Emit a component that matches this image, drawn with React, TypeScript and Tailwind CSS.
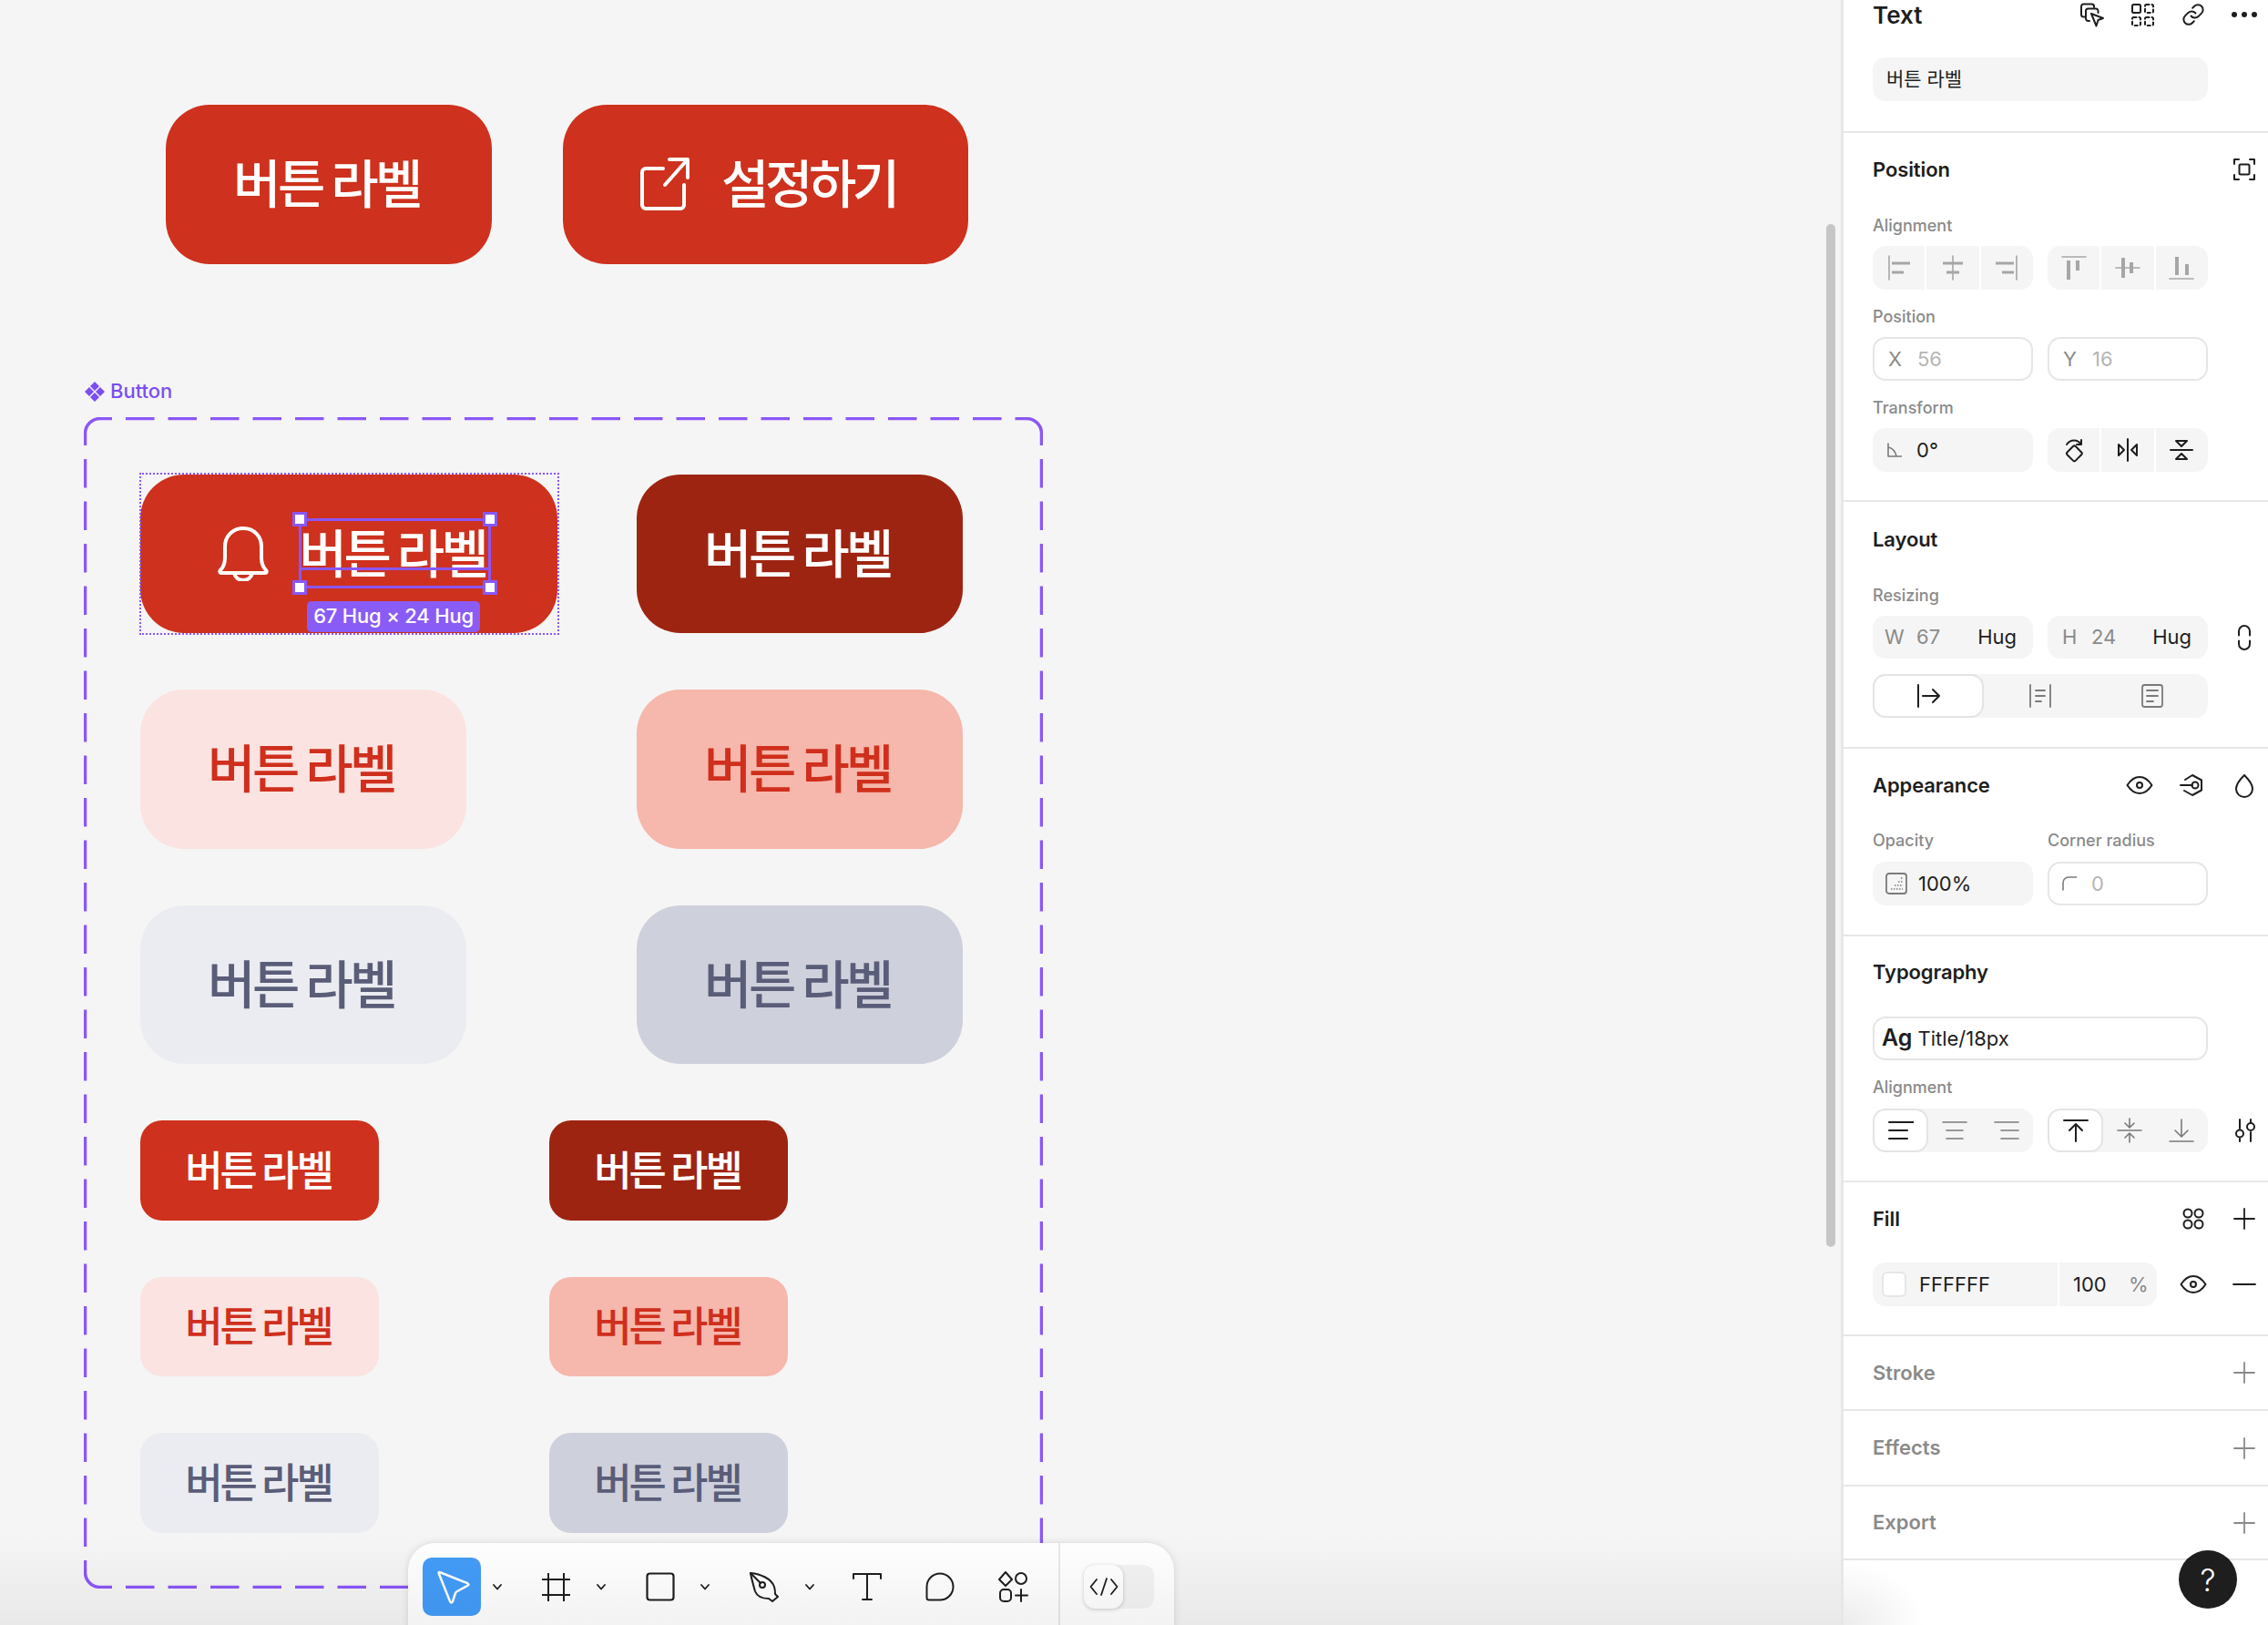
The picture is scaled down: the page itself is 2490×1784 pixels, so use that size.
import React from "react";

const INK = "#1e1e1e";
const GRAY = "#a6a6a6";
const MID = "#7a7a7a";

function S({ w = 28, h = 28, c = INK, sw = 2, vb, children }: { w?: number; h?: number; c?: string; sw?: number; vb?: string; children: React.ReactNode }) {
  return (
    <svg width={w} height={h} viewBox={vb ?? `0 0 ${w} ${h}`} fill="none" stroke={c} strokeWidth={sw} strokeLinecap="round" strokeLinejoin="round" className="shrink-0 block">
      {children}
    </svg>
  );
}

const Bars = ({ kind }: { kind: string }) => {
  const thin = 1.6;
  const thick = 3.2;
  const m: Record<string, React.ReactNode> = {
    l: (<><path d="M3 1v26" strokeWidth={thin} /><path d="M6 9h20M6 19h13" strokeWidth={thick} strokeLinecap="butt" /></>),
    c: (<><path d="M14 1v26" strokeWidth={thin} /><path d="M3 9h22M7 19h14" strokeWidth={thick} strokeLinecap="butt" /></>),
    r: (<><path d="M25 1v26" strokeWidth={thin} /><path d="M2 9h20M9 19h13" strokeWidth={thick} strokeLinecap="butt" /></>),
    t: (<><path d="M1 2h26" strokeWidth={thin} /><path d="M8 6v21M18 6v11" strokeWidth={4} strokeLinecap="butt" /></>),
    m: (<><path d="M1 14h26" strokeWidth={thin} /><path d="M9 3v22M18 8v12" strokeWidth={4} strokeLinecap="butt" /></>),
    b: (<><path d="M1 26h26" strokeWidth={thin} /><path d="M9 2v20M20 10v12" strokeWidth={4} strokeLinecap="butt" /></>),
  };
  return <S c={GRAY}>{m[kind]}</S>;
};

const Eye = () => (
  <S w={30} h={22}>
    <path d="M1.5 11C6 4 10 2 15 2s9 2 13.5 9C24 18 20 20 15 20S6 18 1.5 11Z" />
    <circle cx="15" cy="11" r="3" />
  </S>
);

const Plus = ({ c = INK }: { c?: string }) => (
  <S c={c} sw={1.8}>
    <path d="M14 3v22M3 14h22" />
  </S>
);

function Section({ h, children, className = "" }: { h: string; children: React.ReactNode; className?: string }) {
  return <div className={`${h} box-border border-b-2 border-[#e7e7e7] pl-[32px] pr-[12px] ${className}`}>{children}</div>;
}

const Head = ({ children, right, className = "" }: { children: React.ReactNode; right?: React.ReactNode; className?: string }) => (
  <div className={`flex h-[28px] items-center justify-between ${className}`}>
    <span className="text-[22px] font-semibold tracking-[-0.1px] text-[#1e1e1e]">{children}</span>
    {right}
  </div>
);

const Lab = ({ children, className = "" }: { children: React.ReactNode; className?: string }) => (
  <div className={`flex h-[24px] items-center pb-[2px] text-[18px] font-medium text-[#8a8a8a] ${className}`}>{children}</div>
);

const Group = ({ children, className = "" }: { children: React.ReactNode; className?: string }) => (
  <div className={`flex h-[48px] w-[176px] overflow-hidden rounded-[14px] bg-[#f5f5f5] ${className}`}>{children}</div>
);

const Cell = ({ children, divider, on }: { children: React.ReactNode; divider?: boolean; on?: boolean }) => (
  <div className={`flex flex-1 items-center justify-center ${divider ? "border-r-2 border-white" : ""} ${on ? "rounded-[14px] border-2 border-[#e4e4e4] bg-white" : ""}`}>{children}</div>
);

function Panel() {
  return (
    <aside className="relative box-border h-full w-[469px] shrink-0 border-l-[3px] border-[#e7e7e7] bg-white [font-family:Inter,'Noto_Sans_CJK_KR',sans-serif]">
      <Section h="h-[146px]">
        <div className="flex h-[32px] items-center justify-between">
          <span className="text-[26px] font-semibold text-[#1e1e1e]">Text</span>
          <div className="flex items-center gap-[28px]">
            <S>
              <path d="M17 6V5a2.5 2.5 0 0 0-2.5-2.5h-9A2.5 2.5 0 0 0 3 5v9a2.5 2.5 0 0 0 2.5 2.5H7" />
              <path d="M12 21h-1.5A2.5 2.5 0 0 1 8 18.500V10a2.500 2.500 0 0 1 2.500-2.500H19a2.500 2.500 0 0 1 2.500 2.500v2" />
              <path d="M14 13l13 5-5.500 2-2 6.500Z" />
            </S>
            <S sw={2}>
              <rect x="3" y="3" width="9" height="9" rx="1.500" />
              <rect x="17" y="3" width="9" height="9" rx="1.500" strokeDasharray="3 3" />
              <rect x="3" y="17" width="9" height="9" rx="1.500" strokeDasharray="3 3" />
              <rect x="17" y="17" width="9" height="9" rx="1.500" strokeDasharray="3 3" />
            </S>
            <S>
              <path d="M11.500 15.500a5.500 5.500 0 0 0 8 .6l3.500-3.500a5.500 5.500 0 0 0-7.800-7.800l-2 2" />
              <path d="M16.500 12.500a5.500 5.500 0 0 0-8-.6l-3.500 3.500a5.500 5.500 0 0 0 7.800 7.800l2-2" />
            </S>
            <svg width="28" height="28" viewBox="0 0 28 28" fill={INK} className="block shrink-0">
              <circle cx="3" cy="14" r="3" />
              <circle cx="14" cy="14" r="3" />
              <circle cx="25" cy="14" r="3" />
            </svg>
          </div>
        </div>
        <div className="mt-[31px] flex h-[48px] w-[368px] items-center rounded-[14px] bg-[#f5f5f5] pl-[15px] text-[21px] text-[#1e1e1e]">버튼 라벨</div>
      </Section>

      <Section h="h-[405px]" className="pt-[26px]">
        <Head
          right={
            <S>
              <path d="M8 3H3v5M20 3h5v5M8 25H3v-5M20 25h5v-5" />
              <rect x="8.500" y="8.500" width="11" height="11" rx="1.500" />
            </S>
          }
        >
          Position
        </Head>
        <Lab className="mt-[36px]">Alignment</Lab>
        <div className="mt-[10px] flex w-[368px] justify-between">
          <Group>
            <Cell divider><Bars kind="l" /></Cell>
            <Cell divider><Bars kind="c" /></Cell>
            <Cell><Bars kind="r" /></Cell>
          </Group>
          <Group>
            <Cell divider><Bars kind="t" /></Cell>
            <Cell divider><Bars kind="m" /></Cell>
            <Cell><Bars kind="b" /></Cell>
          </Group>
        </div>
        <Lab className="mt-[18px]">Position</Lab>
        <div className="mt-[10px] flex w-[368px] justify-between text-[22px]">
          <div className="box-border flex h-[48px] w-[176px] items-center rounded-[14px] border-2 border-[#e6e6e6] pl-[15px]">
            <span className="w-[32px] text-[#8a8a8a]">X</span>
            <span className="text-[#b5b5b5]">56</span>
          </div>
          <div className="box-border flex h-[48px] w-[176px] items-center rounded-[14px] border-2 border-[#e6e6e6] pl-[15px]">
            <span className="w-[32px] text-[#8a8a8a]">Y</span>
            <span className="text-[#b5b5b5]">16</span>
          </div>
        </div>
        <Lab className="mt-[18px]">Transform</Lab>
        <div className="mt-[10px] flex w-[368px] justify-between">
          <div className="flex h-[48px] w-[176px] items-center rounded-[14px] bg-[#f5f5f5] pl-[16px] text-[22px] text-[#1e1e1e]">
            <span className="mr-[16px]">
              <S w={16} h={16} c={MID} sw={1.6}>
                <path d="M1 1v14h15M1 5c5 1 8 5 9 10" />
              </S>
            </span>
            0°
          </div>
          <Group>
            <Cell divider>
              <S>
                <rect x="8" y="11" width="13" height="13" rx="2" transform="rotate(45 14 17.500)" />
                <path d="M6 8c4-6 12-6 16 0M22 3v5h-5" />
              </S>
            </Cell>
            <Cell divider>
              <S>
                <path d="M14 2v24M4 8l6 6-6 6ZM24 8l-6 6 6 6Z" />
              </S>
            </Cell>
            <Cell>
              <S>
                <path d="M2 14h24M8 4l6 6 6-6ZM8 24l6-6 6 6Z" />
              </S>
            </Cell>
          </Group>
        </div>
      </Section>

      <Section h="h-[271px]" className="pt-[27px]">
        <Head>Layout</Head>
        <Lab className="mt-[36px]">Resizing</Lab>
        <div className="mt-[10px] flex items-center justify-between">
          <div className="flex w-[368px] justify-between text-[22px]">
            <div className="flex h-[47px] w-[176px] items-center rounded-[14px] bg-[#f5f5f5] pl-[13px] pr-[18px]">
              <span className="w-[35px] text-[#8a8a8a]">W</span>
              <span className="flex-1 text-[#8a8a8a]">67</span>
              <span className="text-[#1e1e1e]">Hug</span>
            </div>
            <div className="flex h-[47px] w-[176px] items-center rounded-[14px] bg-[#f5f5f5] pl-[16px] pr-[18px]">
              <span className="w-[32px] text-[#8a8a8a]">H</span>
              <span className="flex-1 text-[#8a8a8a]">24</span>
              <span className="text-[#1e1e1e]">Hug</span>
            </div>
          </div>
          <S>
            <path d="M8 11.500V7a6 6 0 0 1 12 0v4.500M8 17.500V21a6 6 0 0 0 12 0v-3.500" />
          </S>
        </div>
        <div className="mt-[17px] flex h-[48px] w-[368px] rounded-[14px] bg-[#f5f5f5]">
          <div className="box-border flex w-[122px] items-center justify-center rounded-[14px] border-2 border-[#e4e4e4] bg-white">
            <S>
              <path d="M3 2v24M8 14h18M19 7l7 7-7 7" />
            </S>
          </div>
          <div className="flex w-[123px] items-center justify-center">
            <S c={MID} sw={1.8}>
              <path d="M3 2v24M25 2v24M9 8h10M9 14h10M9 20h6" />
            </S>
          </div>
          <div className="flex w-[123px] items-center justify-center">
            <S c={MID} sw={1.8}>
              <rect x="3" y="2" width="22" height="24" rx="2.500" />
              <path d="M8 8h12M8 14h12M8 20h7" />
            </S>
          </div>
        </div>
      </Section>

      <Section h="h-[206px]" className="pt-[26px]">
        <Head
          right={
            <div className="flex items-center gap-[29px]">
              <Eye />
              <S>
                <path d="M6 8l8-5 10 5.500v11L14 25l-9-5" />
                <path d="M1 14h13" />
                <circle cx="17" cy="14" r="3.500" />
              </S>
              <S>
                <path d="M14 3c5 5 9 10 9 15a9 9 0 0 1-18 0c0-5 4-10 9-15Z" />
              </S>
            </div>
          }
        >
          Appearance
        </Head>
        <div className="mt-[35px] flex w-[368px] justify-between">
          <Lab className="w-[176px]">Opacity</Lab>
          <Lab className="w-[176px]">Corner radius</Lab>
        </div>
        <div className="mt-[11px] flex w-[368px] justify-between text-[22px]">
          <div className="flex h-[48px] w-[176px] items-center rounded-[14px] bg-[#f5f5f5] pl-[14px] text-[#1e1e1e]">
            <span className="mr-[12px]">
              <svg width="24" height="24" viewBox="0 0 24 24" fill="none" className="block">
                <rect x="1" y="1" width="22" height="22" rx="3" stroke={MID} strokeWidth="1.800" />
                <path d="M6 18h13M10 14h9M14 10h5M17 6h2" stroke="#9a9a9a" strokeWidth="1.800" strokeDasharray="1.500 1.500" />
              </svg>
            </span>
            100%
          </div>
          <div className="box-border flex h-[48px] w-[176px] items-center rounded-[14px] border-2 border-[#e6e6e6] pl-[14px] text-[#b5b5b5]">
            <span className="mr-[16px]">
              <S w={16} h={16} c={MID} sw={1.6}>
                <path d="M1 15V7a6 6 0 0 1 6-6h9" />
              </S>
            </span>
            0
          </div>
        </div>
      </Section>

      <Section h="h-[270px]" className="pt-[25px]">
        <Head>Typography</Head>
        <div className="mt-[35px] box-border flex h-[48px] w-[368px] items-center rounded-[14px] border-2 border-[#e6e6e6] pl-[8px] text-[#1e1e1e]">
          <span className="mr-[6px] text-[25px] font-semibold">Ag</span>
          <span className="text-[22px]">Title/18px</span>
        </div>
        <Lab className="mt-[18px]">Alignment</Lab>
        <div className="mt-[11px] flex items-center justify-between">
          <div className="flex w-[368px] justify-between">
            <Group>
              <Cell on><S><path d="M1 5h27M1 14h20M1 23h20" /></S></Cell>
              <Cell><S c={MID} sw={1.6}><path d="M1 5h26M5 14h18M5 23h18" /></S></Cell>
              <Cell><S c={MID} sw={1.6}><path d="M1 5h26M8 14h19M8 23h19" /></S></Cell>
            </Group>
            <Group>
              <Cell on><S><path d="M1 3h26M14 26V8M7 14l7-7 7 7" /></S></Cell>
              <Cell><S c={MID} sw={1.6}><path d="M1 14h26M14 1v9M9 6l5 5 5-5M14 27v-9M9 22l5-5 5 5" /></S></Cell>
              <Cell><S c={MID} sw={1.6}><path d="M1 26h26M14 2v18M7 14l7 7 7-7" /></S></Cell>
            </Group>
          </div>
          <S>
            <path d="M9 2v10M9 23v3M21 2v3M21 16v10" />
            <circle cx="9" cy="17.500" r="4" />
            <circle cx="21" cy="10" r="4" />
          </S>
        </div>
      </Section>

      <Section h="h-[169px]" className="pt-[26px]">
        <Head
          right={
            <div className="flex items-center gap-[28px]">
              <S>
                <circle cx="8" cy="8" r="4.500" />
                <circle cx="20" cy="8" r="4.500" />
                <circle cx="8" cy="20" r="4.500" />
                <circle cx="20" cy="20" r="4.500" />
              </S>
              <Plus />
            </div>
          }
        >
          Fill
        </Head>
        <div className="mt-[34px] flex items-center justify-between">
          <div className="flex h-[48px] w-[312px] items-center rounded-[14px] bg-[#f5f5f5] text-[22px] text-[#1e1e1e]">
            <div className="ml-[10px] mr-[14px] h-[28px] w-[27px] rounded-[6px] border-2 border-[#e6e6e6] bg-white" />
            <span className="w-[152px]">FFFFFF</span>
            <div className="h-full w-[2px] bg-white" />
            <span className="ml-[15px] w-[61px]">100</span>
            <span className="text-[#8a8a8a]">%</span>
          </div>
          <div className="flex items-center gap-[27px]">
            <Eye />
            <S sw={1.800}><path d="M2 14h24" /></S>
          </div>
        </div>
      </Section>

      {["Stroke", "Effects", "Export"].map((t, i) => (
        <div key={t} className={`${i === 0 ? "h-[82px]" : i === 1 ? "h-[83px]" : "h-[81px]"} box-border flex items-center justify-between border-b-2 border-[#e7e7e7] pl-[32px] pr-[12px]`}>
          <span className="text-[22px] font-semibold text-[#8a8a8a]">{t}</span>
          <Plus c="#8a8a8a" />
        </div>
      ))}

      <div className="absolute bottom-0 left-0 h-[70px] w-[90px] bg-[radial-gradient(ellipse_at_bottom_left,#ececec,transparent_70%)]" />
      <div className="absolute left-[368px] top-[1702px] flex h-[64px] w-[64px] items-center justify-center rounded-full bg-[#1e1e1e] text-[34px] font-light text-white">?</div>
    </aside>
  );
}

const variants = {
  red: "bg-[#ce311d] text-white",
  dark: "bg-[#9e2412] text-white",
  pink: "bg-[#fae3e0] text-[#cf2f1c]",
  salmon: "bg-[#f6b7ac] text-[#cf2f1c]",
  gray: "bg-[#ebecf1] text-[#5a5d78]",
  slate: "bg-[#ced0db] text-[#5a5d78]",
};

const LG = "flex h-[174.5px] w-[358px] items-center justify-center rounded-[48px] pb-[7px] pr-[5px] text-[57px] tracking-[-3.5px] font-medium";
const SM = "flex h-[109.5px] w-[262px] items-center justify-center rounded-[24px] pb-[5px] pr-[3px] text-[45px] tracking-[-3px] font-medium";

function Canvas() {
  const K = "[font-family:'Noto_Sans_CJK_KR',sans-serif]";
  return (
    <main className="relative h-full flex-1 bg-[#f5f5f5]">
      <div className={`flex gap-[78px] pl-[182px] pt-[115px] ${K}`}>
        <div className={`${LG} ${variants.red}`}>버튼 라벨</div>
        <div className={`flex h-[174.5px] w-[445px] items-center rounded-[48px] pb-[7px] pl-[84px] text-[57px] tracking-[-4.500px] font-medium ${variants.red}`}>
          <svg width="56" height="58" viewBox="0 0 56 58" fill="none" stroke="white" strokeWidth="4" strokeLinecap="round" strokeLinejoin="round" className="mr-[34px] mt-[7px] block">
            <path d="M26 12H7a4 4 0 0 0-4 4v36a4 4 0 0 0 4 4h38a4 4 0 0 0 4-4V30" />
            <path d="M28 30 52 3M33 2h20v20" />
          </svg>
          설정하기
        </div>
      </div>

      <div className="ml-[93px] mt-[125px] flex h-[30px] items-center gap-[6px] [font-family:Inter,sans-serif] text-[22px] font-medium text-[#7c4ef0]">
        <svg width="22" height="22" viewBox="0 0 22 22" fill="#7c4ef0" className="block">
          <path d="M11 0l5 5-5 5-5-5ZM5 6l5 5-5 5-5-5ZM17 6l5 5-5 5-5-5ZM11 12l5 5-5 5-5-5Z" />
        </svg>
        Button
      </div>

      <div className={`relative ml-[92px] mt-[13px] box-border flex h-[1286px] w-[1053px] flex-col gap-y-[62px] pl-[62px] pt-[63px] ${K}`}>
        <svg className="absolute left-0 top-0 block" width="1053" height="1286" fill="none" stroke="#8a57f8" strokeWidth="3.500">
          <path d="M1.500 30V18A16.500 16.500 0 0 1 18 1.500H30M1023 1.500H1035A16.500 16.500 0 0 1 1051.500 18V30M1051.500 1256V1268A16.500 16.500 0 0 1 1035 1284.500H1023M30 1284.500H18A16.500 16.500 0 0 1 1.500 1268V1256" />
          <path d="M30 1.500H1023M1051.500 30V1256M30 1284.500H1023M1.500 30V1256" strokeDasharray="31.500 15" strokeDashoffset="-16" />
        </svg>

        <div className="relative grid grid-cols-[545px_358px]">
          <div className="relative box-content flex h-[174.5px] w-[458px] items-center">
            <div className={`flex h-full w-full items-center rounded-[48px] pl-[85px] ${variants.red}`}>
              <svg width="56" height="60" viewBox="0 0 56 60" fill="none" stroke="white" strokeWidth="4" strokeLinecap="round" strokeLinejoin="round" className="block">
                <path d="M3 48c3-3 5-8 5-14V22C8 11 16 2 28 2s20 9 20 20v12c0 6 2 11 5 14 1 1 1 3-1 3H4c-2 0-2-2-1-3Z" />
                <path d="M18 51c1 5 5 8 10 8s9-3 10-8" />
              </svg>
              <div className="relative ml-[33px] flex h-[77px] w-[211px] items-center justify-center pb-[6px] pr-[5px] text-[57px] tracking-[-3.5px] font-medium">
                버튼 라벨
                <div className="absolute inset-x-0 bottom-[20px] h-[3px] bg-[#8a57f8]" />
                <div className="absolute inset-0 border-[3px] border-[#8a57f8]" />
                <span className="absolute -left-[7px] -top-[7px] h-[16px] w-[16px] border-[3px] border-[#8a57f8] bg-white" />
                <span className="absolute -right-[7px] -top-[7px] h-[16px] w-[16px] border-[3px] border-[#8a57f8] bg-white" />
                <span className="absolute -bottom-[7px] -left-[7px] h-[16px] w-[16px] border-[3px] border-[#8a57f8] bg-white" />
                <span className="absolute -bottom-[7px] -right-[7px] h-[16px] w-[16px] border-[3px] border-[#8a57f8] bg-white" />
              </div>
            </div>
            <div className="pointer-events-none absolute -inset-[1.500px] border-2 border-dotted border-[#8a57f8]" />
            <div className="absolute left-[183px] top-[139px] flex h-[34px] w-[190px] items-center justify-center rounded-[5px] bg-[#8a5cf6] [font-family:Inter,sans-serif] text-[22px] font-medium tracking-[-0.2px] text-white">67 Hug × 24 Hug</div>
          </div>
          <div className={`${LG} ${variants.dark}`}>버튼 라벨</div>
        </div>
        <div className="grid grid-cols-[545px_358px]">
          <div className={`${LG} ${variants.pink}`}>버튼 라벨</div>
          <div className={`${LG} ${variants.salmon}`}>버튼 라벨</div>
        </div>
        <div className="grid grid-cols-[545px_358px]">
          <div className={`${LG} ${variants.gray}`}>버튼 라벨</div>
          <div className={`${LG} ${variants.slate}`}>버튼 라벨</div>
        </div>
        <div className="grid grid-cols-[449px_262px]">
          <div className={`${SM} ${variants.red}`}>버튼 라벨</div>
          <div className={`${SM} ${variants.dark}`}>버튼 라벨</div>
        </div>
        <div className="grid grid-cols-[449px_262px]">
          <div className={`${SM} ${variants.pink}`}>버튼 라벨</div>
          <div className={`${SM} ${variants.salmon}`}>버튼 라벨</div>
        </div>
        <div className="grid grid-cols-[449px_262px]">
          <div className={`${SM} ${variants.gray}`}>버튼 라벨</div>
          <div className={`${SM} ${variants.slate}`}>버튼 라벨</div>
        </div>
      </div>

      <div className="absolute left-[2005px] top-[246px] h-[1123px] w-[10px] rounded-full bg-[#c6c6c6]" />

      <Toolbar />
      <div className="pointer-events-none absolute inset-x-0 bottom-0 h-[100px] bg-gradient-to-b from-transparent to-black/[0.05]" />
    </main>
  );
}

const Chev = ({ className }: { className: string }) => (
  <span className={className}>
    <S w={10} h={7} sw={1.800}>
      <path d="M1 1l4 4.500L9 1" />
    </S>
  </span>
);

function Toolbar() {
  return (
    <div className="absolute left-[448px] top-[1694px] flex h-[120px] w-[841px] items-start rounded-[30px] bg-white pl-[16px] pt-[16px] shadow-[0_0_8px_rgba(0,0,0,0.12)]">
      <div className="flex h-[64px] items-center">
        <div className="flex h-[64px] w-[64px] items-center justify-center rounded-[10px] bg-[#439cf8]">
          <svg width="64" height="64" viewBox="0 0 64 64" fill="none" stroke="white" strokeWidth="2.500" strokeLinejoin="round" className="block">
            <path d="M18 18C17 16 18 15.500 20 16.500L49 28c2 1 2 2 0 3l-11 6c-1 .5-1.500 1-2 2l-3 9c-.5 2-2 2-3 0Z" />
          </svg>
        </div>
        <Chev className="ml-[13px]" />
        <span className="ml-[44px]">
          <S w={31} h={31}>
            <path d="M0 7h31M0 24h31M7 0v31M24 0v31" strokeLinecap="butt" />
          </S>
        </span>
        <Chev className="ml-[29px]" />
        <span className="ml-[44px]">
          <S w={32} h={32} sw={2.200}>
            <rect x="1.500" y="1.500" width="29" height="29" rx="3" />
          </S>
        </span>
        <Chev className="ml-[28px]" />
        <span className="ml-[43px]">
          <S w={34} h={34}>
            <path d="M2 2C13 3 25 8 28 17c1 3 1 6 1 8l3 3-6 5-4-3C14 30 9 27 7 22 5 15 3 8 2 2Z" />
            <path d="M2 2l11 11" />
            <circle cx="15" cy="15" r="3" />
          </S>
        </span>
        <Chev className="ml-[28px]" />
        <span className="ml-[42px]">
          <S w={32} h={30}>
            <path d="M1 6V1h30v5M16 1v28M11 29h10" />
          </S>
        </span>
        <span className="ml-[48px]">
          <S w={32} h={32}>
            <path d="M1.500 28V16A14.500 14.500 0 1 1 16 30.500H4a2.500 2.500 0 0 1-2.500-2.500Z" />
          </S>
        </span>
        <span className="ml-[47px]">
          <S w={34} h={34}>
            <path d="M9 1l7 8-7 7-7-7Z" />
            <circle cx="26" cy="8" r="6" />
            <rect x="3" y="20" width="12" height="13" rx="4" />
            <path d="M26 20v13M20 26.500h13" />
          </S>
        </span>
        <div className="ml-[33px] -mt-[16px] h-[120px] w-[2px] self-start bg-[#e8e8e8]" />
        <div className="ml-[26px] flex h-[48px] w-[77px] rounded-[12px] bg-[#f3f3f3]">
          <div className="flex h-[48px] w-[43px] items-center justify-center rounded-[12px] bg-white shadow-[0_1px_4px_rgba(0,0,0,0.2)]">
            <S w={32} h={22} sw={1.800}>
              <path d="M8 3 1.500 11 8 19M24 3l6.500 8L24 19M19 2l-6 18" />
            </S>
          </div>
        </div>
      </div>
    </div>
  );
}

export default function App() {
  return (
    <div className="relative flex h-[1784px] w-[2490px] overflow-hidden">
      <Canvas />
      <Panel />
    </div>
  );
}
